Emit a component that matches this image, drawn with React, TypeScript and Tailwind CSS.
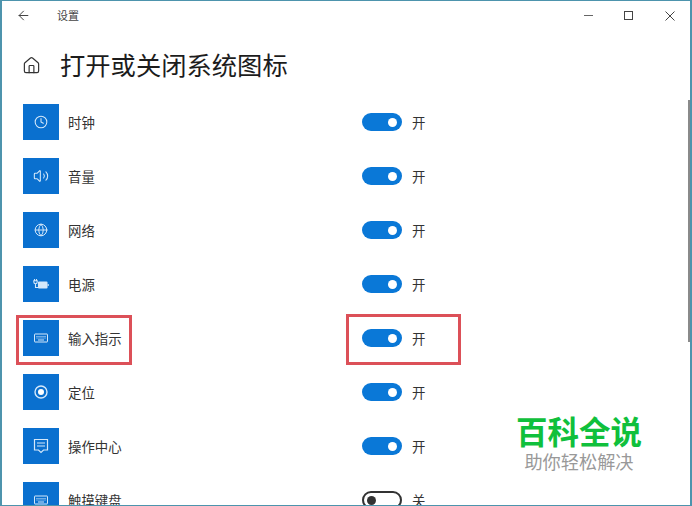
import { ArrowLeft, Clock, Globe, Home, Volume2 } from 'lucide-react'
import type { ReactNode } from 'react'

const cjk = "font-['Noto_Sans_CJK_SC','Noto_Sans',sans-serif]"

function KeyboardIcon() {
  return (
    <svg width="16" height="12" viewBox="0 0 16 12" fill="none" stroke="currentColor" strokeWidth="1">
      <rect x="1.5" y="2" width="13" height="8" rx="0.5" />
      <path d="M3.5 4.5h9M3.5 6h9" strokeDasharray="1 1" />
      <path d="M5 8h6" />
    </svg>
  )
}

function BatteryIcon() {
  return (
    <svg width="16" height="12" viewBox="0 0 16 12" fill="none" stroke="currentColor" strokeWidth="1.1">
      <path d="M1.5 1v1.5M3.5 1v1.5M0.8 2.8h3.4v1.2a1.7 1.7 0 0 1-3.4 0zM2.5 5.8v3.7h2.5" />
      <rect x="5.5" y="4" width="8.5" height="6" rx="0.5" fill="currentColor" />
      <path d="M15.2 6v2" />
    </svg>
  )
}

function ActionIcon() {
  return (
    <svg width="16" height="16" viewBox="0 0 16 16" fill="none" stroke="currentColor" strokeWidth="1.2">
      <path d="M1.5 1.5h13v10.5h-4l-2.5 2.5-2.5-2.5h-4z" />
      <path d="M4 5h8M4 8h8" />
    </svg>
  )
}

function LocationIcon() {
  return (
    <svg width="14" height="14" viewBox="0 0 14 14" fill="none" stroke="currentColor" strokeWidth="1.4">
      <circle cx="7" cy="7" r="6" />
      <circle cx="7" cy="7" r="3" fill="#fff" stroke="none" />
    </svg>
  )
}

const rows: { label: string; icon: ReactNode; on: boolean }[] = [
  { label: '时钟', icon: <Clock size={14} strokeWidth={1.8} />, on: true },
  { label: '音量', icon: <Volume2 size={16} strokeWidth={1.6} />, on: true },
  { label: '网络', icon: <Globe size={14} strokeWidth={1.7} />, on: true },
  { label: '电源', icon: <BatteryIcon />, on: true },
  { label: '输入指示', icon: <KeyboardIcon />, on: true },
  { label: '定位', icon: <LocationIcon />, on: true },
  { label: '操作中心', icon: <ActionIcon />, on: true },
  { label: '触摸键盘', icon: <KeyboardIcon />, on: false },
]

function Toggle({ on }: { on: boolean }) {
  return on ? (
    <div className="flex h-[18px] w-10 items-center justify-end rounded-full bg-[#0a78d7] pr-[5px]">
      <div className="h-[9px] w-[9px] rounded-full bg-white" />
    </div>
  ) : (
    <div className="flex h-[18px] w-10 items-center rounded-full border-2 border-[#333] pl-[3px]">
      <div className="h-[9px] w-[9px] rounded-full bg-[#333]" />
    </div>
  )
}

export default function App() {
  return (
    <div className={`${cjk} relative flex h-[506px] w-[692px] flex-col overflow-hidden border-x-2 border-y border-[#4d94ad] bg-white text-[#222]`}>
      {/* title bar */}
      <div className="flex h-[29px] shrink-0 items-center">
        <ArrowLeft size={15} strokeWidth={1.6} className="ml-[14px] text-[#444]" />
        <span className="ml-[26px] text-[11px] text-[#444]">设置</span>
        <div className="ml-auto flex items-center text-[#444]">
          <div className="mr-[31px] h-px w-[9px] bg-[#666]" />
          <div className="mr-[32px] h-[9px] w-[9px] border border-[#444]" />
          <svg width="10" height="10" viewBox="0 0 10 10" stroke="currentColor" strokeWidth="1" className="mr-[15px]">
            <path d="M0.5 0.5l9 9M9.5 0.5l-9 9" />
          </svg>
        </div>
      </div>

      {/* page heading */}
      <div className="flex h-[65px] shrink-0 items-center pt-[5px]">
        <Home size={19} strokeWidth={1.5} className="ml-[20px] text-[#333]" />
        <h1 className="ml-[19px] text-[25.3px] font-normal leading-none text-[#1c1c1c]">打开或关闭系统图标</h1>
      </div>

      {/* list */}
      <div className="flex flex-col pl-[21px]">
        {rows.map((row) => (
          <div key={row.label} className="flex h-[54px] shrink-0 items-center">
            <div className="flex h-9 w-9 items-center justify-center bg-[#0a70cf] text-[#d5e8fa]">{row.icon}</div>
            <span className="ml-[9px] w-[294px] text-[13.4px] text-[#333]">{row.label}</span>
            <Toggle on={row.on} />
            <span className="ml-[10px] text-[13.4px] text-[#333]">{row.on ? '开' : '关'}</span>
          </div>
        ))}
      </div>

      {/* scrollbar */}
      <div className="absolute right-[0px] top-[99px] h-[242px] w-[2px] bg-[#8a8a8a]" />

      {/* red annotations */}
      <div className="absolute left-[14px] top-[314px] h-[50px] w-[116px] border-[3px] border-[#dc5058]" />
      <div className="absolute left-[344px] top-[313px] h-[51px] w-[115px] border-[3px] border-[#dc5058]" />

      {/* watermark */}
      <div className="absolute left-[513px] top-[414px] flex w-[128px] flex-col items-center gap-[5px] bg-white">
        <span className="whitespace-nowrap text-[31.5px] font-bold leading-none text-[#10c03c]">百科全说</span>
        <span className="whitespace-nowrap text-[18.2px] leading-none text-[#999]">助你轻松解决</span>
      </div>
    </div>
  )
}
